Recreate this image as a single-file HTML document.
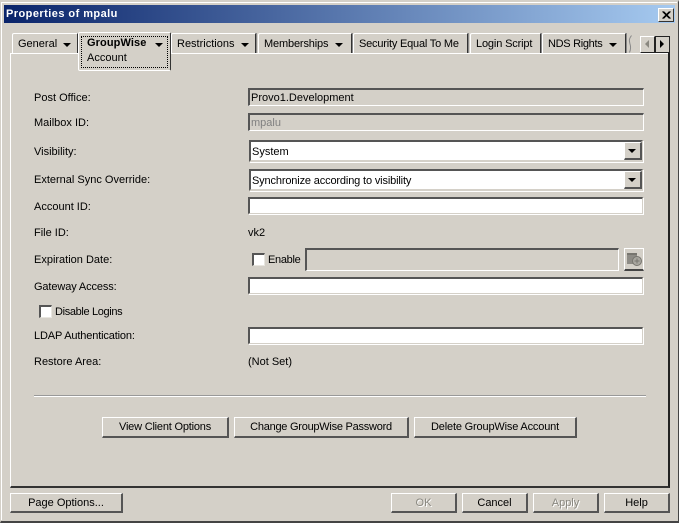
<!DOCTYPE html>
<html><head><meta charset="utf-8"><style>
html,body{margin:0;padding:0;background:#d4d0c8;}
#w{position:relative;width:679px;height:523px;overflow:hidden;background:#d4d0c8;font:11px "Liberation Sans",sans-serif;color:#000;}
#w div{position:absolute;box-sizing:border-box;}
.t{white-space:nowrap;line-height:13px;height:13px;}
.f{background:#d4d0c8;border-top:2px solid #555;border-left:2px solid #555;border-right:1px solid #fff;border-bottom:1px solid #fff;padding:2px 0 0 1px;line-height:13px;white-space:nowrap;}
.w{background:#fff;border-top:2px solid #555;border-left:2px solid #555;border-right:2px solid #d4d0c8;border-bottom:2px solid #d4d0c8;box-shadow:1px 1px 0 #fff;}
.b{background:#d4d0c8;border-top:1px solid #fff;border-left:1px solid #fff;border-right:2px solid #555;border-bottom:2px solid #555;text-align:center;line-height:19px;white-space:nowrap;}
.c{background:#fff;border-top:2px solid #555;border-left:2px solid #555;border-right:1px solid #e8e6e0;border-bottom:1px solid #e8e6e0;width:13px;height:13px;}
.tab{top:33px;height:20px;border-top:1px solid #fff;border-left:1px solid #fff;border-right:1px solid #333;box-shadow:1px 0 0 #888;border-top-left-radius:2px;background:#d4d0c8;line-height:21px;white-space:nowrap;padding-left:5px;}
.ar{width:0;height:0;border-left:4px solid transparent;border-right:4px solid transparent;border-top:4px solid #000;}
.s{width:18px;height:18px;top:2px;right:0;background:#d4d0c8;border-top:1px solid #fff;border-left:1px solid #fff;border-right:2px solid #555;border-bottom:2px solid #555;}
.dis{color:#8a8880;text-shadow:1px 1px 0 #fff;}
</style></head><body><div id="w">
<div style="left:0;top:0;width:679px;height:523px;border-top:2px solid #d4d0c8;border-left:1px solid #d4d0c8;border-right:1px solid #444;border-bottom:2px solid #444;"></div>
<div style="left:1px;top:2px;width:676px;height:1px;background:#fff;"></div>
<div style="left:1px;top:2px;width:1px;height:518px;background:#fff;"></div>
<div style="left:4px;top:5px;width:671px;height:18px;background:linear-gradient(90deg,#0a246a,#a6caf0);"></div>
<div class="t" style="left:6px;top:8px;color:#fff;font-weight:bold;font-size:11px;letter-spacing:.45px;">Properties of mpalu</div>
<div style="left:658px;top:8px;width:16px;height:14px;background:#d4d0c8;border-top:1px solid #fff;border-left:1px solid #fff;border-right:1px solid #333;border-bottom:1px solid #333;"><svg width="14" height="12" style="position:absolute;left:0;top:0"><path d="M3.5 2.5L10.5 9.5M4.5 2.5L11.5 9.5M10.5 2.5L3.5 9.5M11.5 2.5L4.5 9.5" stroke="#000" fill="none"/></svg></div>

<div style="left:10px;top:53px;width:660px;height:435px;border-top:1px solid #fff;border-left:1px solid #fff;border-right:2px solid #222;border-bottom:2px solid #333;"></div>

<div class="tab" style="left:12px;width:66px;">General</div><div class="ar" style="left:63px;top:43px;"></div>
<div class="tab" style="left:171px;width:85px;">Restrictions</div><div class="ar" style="left:241px;top:43px;"></div>
<div class="tab" style="left:258px;width:94px;letter-spacing:-.15px;">Memberships</div><div class="ar" style="left:335px;top:43px;"></div>
<div class="tab" style="left:353px;width:115px;letter-spacing:-.2px;">Security Equal To Me</div>
<div class="tab" style="left:470px;width:71px;letter-spacing:-.15px;">Login Script</div>
<div class="tab" style="left:542px;width:84px;letter-spacing:-.3px;">NDS Rights</div><div class="ar" style="left:609px;top:43px;"></div>
<div style="left:628px;top:35px;width:5px;height:18px;"><svg width="5" height="18" style="position:absolute;left:0;top:0"><path d="M3.5 0.5C1 4 1 5 2 9C3 12 3 14 1.5 17.5" stroke="#888" fill="none"/></svg></div>

<div style="left:78px;top:32px;width:93px;height:39px;background:#d4d0c8;border-top:1px solid #fff;border-left:1px solid #fff;border-right:1px solid #333;border-bottom:1px solid #fff;border-radius:2px;"></div>
<div style="left:81px;top:36px;width:87px;height:32px;border:1px dotted #000;"></div>
<div class="t" style="left:87px;top:37px;font-weight:bold;letter-spacing:.1px;">GroupWise</div><div class="ar" style="left:155px;top:43px;"></div>
<div class="t" style="left:87px;top:52px;">Account</div>

<div style="left:640px;top:36px;width:15px;height:17px;background:#d4d0c8;border-top:1px solid #fff;border-left:1px solid #fff;border-right:1px solid #222;border-bottom:1px solid #222;"><svg width="12" height="14" style="position:absolute;left:0;top:0"><path d="M8 3L8 11L4 7Z" fill="#8a8880"/></svg></div>
<div style="left:655px;top:36px;width:15px;height:17px;background:#d4d0c8;border-top:1px solid #222;border-left:1px solid #222;border-right:1px solid #222;border-bottom:1px solid #222;"><svg width="12" height="14" style="position:absolute;left:0;top:0"><path d="M4 3L4 11L8 7Z" fill="#000"/></svg></div>
<div style="left:668px;top:52px;width:2px;height:2px;background:#222;"></div>

<div class="t" style="left:34px;top:92px;">Post Office:</div>
<div class="f" style="left:248px;top:88px;width:396px;height:18px;">Provo1.Development</div>
<div class="t" style="left:34px;top:117px;">Mailbox ID:</div>
<div class="f" style="left:248px;top:113px;width:396px;height:18px;color:#808080;">mpalu</div>
<div class="t" style="left:34px;top:146px;">Visibility:</div>
<div class="w" style="left:249px;top:140px;width:394px;height:22px;"></div>
<div class="t" style="left:252px;top:146px;">System</div>
<div class="b s" style="left:624px;top:142px;width:18px;height:18px;right:auto;"><div class="ar" style="left:3px;top:6px;"></div></div>
<div class="t" style="left:34px;top:174px;">External Sync Override:</div>
<div class="w" style="left:249px;top:169px;width:394px;height:22px;"></div>
<div class="t" style="left:252px;top:175px;letter-spacing:-.15px;">Synchronize according to visibility</div>
<div class="b s" style="left:624px;top:171px;width:18px;height:18px;right:auto;"><div class="ar" style="left:3px;top:6px;"></div></div>
<div class="t" style="left:34px;top:201px;">Account ID:</div>
<div class="w" style="left:248px;top:197px;width:395px;height:17px;border-right:1px solid #d4d0c8;border-bottom:1px solid #d4d0c8;"></div>
<div class="t" style="left:34px;top:227px;">File ID:</div>
<div class="t" style="left:248px;top:227px;">vk2</div>
<div class="t" style="left:34px;top:254px;">Expiration Date:</div>
<div class="c" style="left:252px;top:253px;"></div>
<div class="t" style="left:268px;top:254px;letter-spacing:-.3px;">Enable</div>
<div class="f" style="left:305px;top:248px;width:314px;height:23px;"></div>
<div style="left:624px;top:248px;width:20px;height:23px;background:#d4d0c8;border-top:1px solid #fff;border-left:1px solid #fff;border-right:1px solid #fff;border-bottom:2px solid #444;"><svg width="18" height="20" style="position:absolute;left:0;top:0"><rect x="2" y="4" width="10" height="11" fill="#8d8b85"/><rect x="2" y="4" width="10" height="2" fill="#77756f"/><circle cx="12" cy="12" r="4.5" fill="#a8a69f" stroke="#77756f"/><path d="M12 9.5V14.5M9.5 12H14.5" stroke="#77756f"/></svg></div>
<div class="t" style="left:34px;top:281px;letter-spacing:-.12px;">Gateway Access:</div>
<div class="w" style="left:248px;top:277px;width:395px;height:17px;border-right:1px solid #d4d0c8;border-bottom:1px solid #d4d0c8;"></div>
<div class="c" style="left:39px;top:305px;"></div>
<div class="t" style="left:55px;top:306px;letter-spacing:-.35px;">Disable Logins</div>
<div class="t" style="left:34px;top:330px;letter-spacing:-.15px;">LDAP Authentication:</div>
<div class="w" style="left:248px;top:327px;width:395px;height:17px;border-right:1px solid #d4d0c8;border-bottom:1px solid #d4d0c8;"></div>
<div class="t" style="left:34px;top:356px;">Restore Area:</div>
<div class="t" style="left:248px;top:356px;">(Not Set)</div>

<div style="left:34px;top:395px;width:612px;height:1px;background:#999;"></div>
<div style="left:34px;top:396px;width:612px;height:1px;background:#fff;"></div>

<div class="b" style="left:102px;top:417px;width:127px;height:21px;letter-spacing:-.2px;">View Client Options</div>
<div class="b" style="left:234px;top:417px;width:175px;height:21px;letter-spacing:-.25px;">Change GroupWise Password</div>
<div class="b" style="left:414px;top:417px;width:163px;height:21px;letter-spacing:-.17px;">Delete GroupWise Account</div>
<div class="b" style="left:10px;top:493px;width:113px;height:20px;line-height:18px;">Page Options...</div>
<div class="b dis" style="left:391px;top:493px;width:66px;height:20px;line-height:18px;">OK</div>
<div class="b" style="left:462px;top:493px;width:66px;height:20px;line-height:18px;">Cancel</div>
<div class="b dis" style="left:533px;top:493px;width:66px;height:20px;line-height:18px;">Apply</div>
<div class="b" style="left:604px;top:493px;width:66px;height:20px;line-height:18px;">Help</div>
</div></body></html>
